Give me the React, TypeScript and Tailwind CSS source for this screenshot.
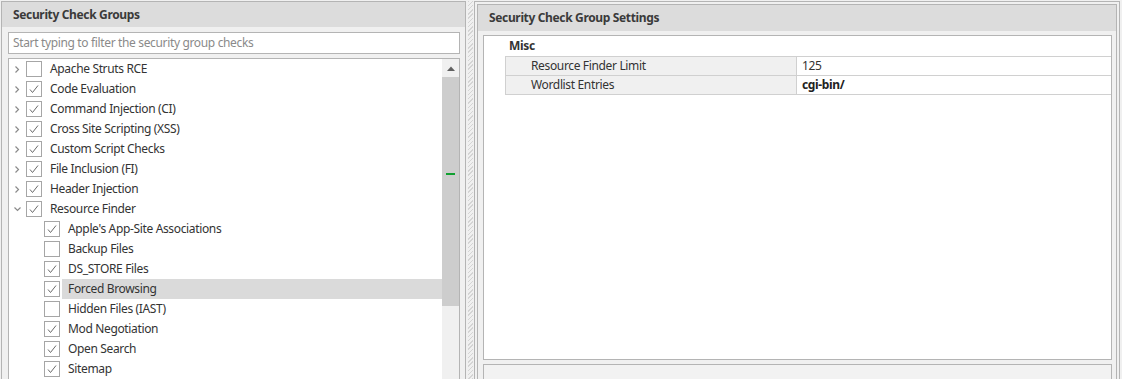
import React from "react";

const F = { fontFamily: '"Noto Sans", "Open Sans", sans-serif' };

function Check({ on }: { on: boolean }) {
  return (
    <div className="w-[16px] h-[16px] border border-[#a6a6a6] bg-white shrink-0 flex items-center justify-center">
      {on && (
        <svg width="14" height="14" viewBox="0 0 14 14">
          <polyline points="3,7.5 5.5,10.5 11,3.5" fill="none" stroke="#6a6a6a" strokeWidth="1" />
        </svg>
      )}
    </div>
  );
}

function Chevron({ open }: { open: boolean }) {
  return (
    <div className="w-[17px] h-[20px] shrink-0 flex items-center justify-center">
      {open ? (
        <svg width="7" height="5" viewBox="0 0 7 5">
          <polyline points="0.5,0.5 3.5,3.5 6.5,0.5" fill="none" stroke="#8a8a8a" strokeWidth="1.2" />
        </svg>
      ) : (
        <svg width="5" height="7" viewBox="0 0 5 7">
          <polyline points="0.5,0.5 3.5,3.5 0.5,6.5" fill="none" stroke="#8a8a8a" strokeWidth="1.2" />
        </svg>
      )}
    </div>
  );
}

type Item = { label: string; on: boolean; child?: boolean; open?: boolean; sel?: boolean };

const items: Item[] = [
  { label: "Apache Struts RCE", on: false },
  { label: "Code Evaluation", on: true },
  { label: "Command Injection (CI)", on: true },
  { label: "Cross Site Scripting (XSS)", on: true },
  { label: "Custom Script Checks", on: true },
  { label: "File Inclusion (FI)", on: true },
  { label: "Header Injection", on: true },
  { label: "Resource Finder", on: true, open: true },
  { label: "Apple's App-Site Associations", on: true, child: true },
  { label: "Backup Files", on: false, child: true },
  { label: "DS_STORE Files", on: true, child: true },
  { label: "Forced Browsing", on: true, child: true, sel: true },
  { label: "Hidden Files (IAST)", on: false, child: true },
  { label: "Mod Negotiation", on: true, child: true },
  { label: "Open Search", on: true, child: true },
  { label: "Sitemap", on: true, child: true },
];

function Row({ it }: { it: Item }) {
  return (
    <div className="h-[20px] flex items-center">
      {it.child ? <div className="w-[35px] shrink-0" /> : <Chevron open={!!it.open} />}
      <Check on={it.on} />
      <div className={"ml-[2px] flex-1 h-[20px] flex items-center pl-[6px] " + (it.sel ? "bg-[#dadada]" : "")}>
        <span className="text-[12px] tracking-[-0.35px] text-[#333333] whitespace-nowrap">{it.label}</span>
      </div>
    </div>
  );
}

export default function App() {
  return (
    <div className="w-[1122px] h-[379px] overflow-hidden bg-[#f0f0f0] flex items-start pt-[1px] pl-[1px]" style={F}>
      {/* Left panel */}
      <div className="w-[465px] h-[400px] border border-[#b4b4b4] bg-[#f0f0f0] flex flex-col shrink-0">
        <div className="h-[25px] bg-[#dcdcdc] flex items-center pl-[11px]">
          <span className="text-[12px] tracking-[-0.35px] font-bold text-[#3a3a3a]">Security Check Groups</span>
        </div>
        <div className="mt-[5px] ml-[6px] mr-[5px] h-[22px] border border-[#b4b4b4] bg-white flex items-center pl-[4px]">
          <span className="text-[12px] tracking-[-0.35px] text-[#8a8a8a] whitespace-nowrap">Start typing to filter the security group checks</span>
        </div>
        <div className="mt-[4px] ml-[6px] mr-[5px] flex-1 border border-[#b4b4b4] bg-white flex">
          <div className="flex-1 flex flex-col">
            {items.map((it) => (
              <Row key={it.label} it={it} />
            ))}
          </div>
          <div className="w-[17px] shrink-0 bg-[#f0f0f0] flex flex-col">
            <div className="h-[18px] flex items-center justify-center">
              <svg width="8" height="5" viewBox="0 0 8 5">
                <polygon points="0,5 4,0.5 8,5" fill="#606060" />
              </svg>
            </div>
            <div className="relative h-[229px] bg-[#cdcdcd]">
              <div className="absolute left-[4px] top-[96px] w-[9px] h-[2px] bg-[#10a030]" />
            </div>
          </div>
        </div>
      </div>

      {/* Splitter */}
      <div className="w-[8px] h-[400px] shrink-0 flex pl-[2px]">
        <div className="w-[5px] h-full bg-[repeating-linear-gradient(135deg,#d4d4d4_0px,#d4d4d4_1px,#f0f0f0_1px,#f0f0f0_3px)]" />
      </div>

      {/* Right panel */}
      <div className="w-[646px] h-[400px] border border-[#b4b4b4] p-[2px] bg-[#f0f0f0] shrink-0">
        <div className="h-full border border-[#b4b4b4] flex flex-col bg-[#f0f0f0]">
          <div className="h-[26px] bg-[#dcdcdc] flex items-center pl-[11px]">
            <span className="text-[12px] tracking-[-0.35px] font-bold text-[#3a3a3a]">Security Check Group Settings</span>
          </div>
          <div className="mt-[4px] ml-[5px] mr-[4px] h-[325px] border border-[#b4b4b4] bg-white flex flex-col">
            <div className="h-[21px] flex items-center border-b border-[#d0d0d0] ml-[21px]">
              <span className="pl-[4px] text-[12px] tracking-[-0.35px] font-bold text-[#333333]">Misc</span>
            </div>
            <div className="h-[19px] flex ml-[21px] border-b border-[#d0d0d0]">
              <div className="w-[292px] bg-[#f0f0f0] border-l border-[#d0d0d0] border-r flex items-center pl-[25px]">
                <span className="text-[12px] tracking-[-0.35px] text-[#333333]">Resource Finder Limit</span>
              </div>
              <div className="flex-1 flex items-center pl-[5px]">
                <span className="text-[12px] tracking-[-0.35px] text-[#333333]">125</span>
              </div>
            </div>
            <div className="h-[19px] flex ml-[21px] border-b border-[#d0d0d0]">
              <div className="w-[292px] bg-[#f0f0f0] border-l border-[#d0d0d0] border-r flex items-center pl-[25px]">
                <span className="text-[12px] tracking-[-0.35px] text-[#333333]">Wordlist Entries</span>
              </div>
              <div className="flex-1 flex items-center pl-[5px]">
                <span className="text-[12px] tracking-[-0.35px] font-bold text-[#222222]">cgi-bin/</span>
              </div>
            </div>
          </div>
          <div className="mt-[4px] ml-[5px] mr-[4px] flex-1 border border-[#b4b4b4] bg-[#f2f2f2]" />
        </div>
      </div>
    </div>
  );
}
